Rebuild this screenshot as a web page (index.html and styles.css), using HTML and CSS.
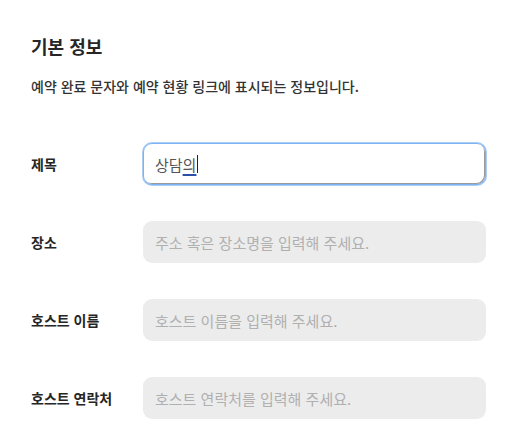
FILE: index.html
```html
<!DOCTYPE html>
<html lang="ko">
<head>
<meta charset="utf-8">
<link rel="stylesheet" href="styles.css">
</head>
<body>
<section class="panel">
  <h2 class="title">기본 정보</h2>
  <p class="desc">예약 완료 문자와 예약 현황 링크에 표시되는 정보입니다.</p>
  <div class="form">
    <div class="row">
      <span class="label">제목</span>
      <div class="field focused">상담<span class="compose">의</span><span class="caret"></span></div>
    </div>
    <div class="row">
      <span class="label">장소</span>
      <div class="field placeholder">주소 혹은 장소명을 입력해 주세요.</div>
    </div>
    <div class="row">
      <span class="label">호스트 이름</span>
      <div class="field placeholder">호스트 이름을 입력해 주세요.</div>
    </div>
    <div class="row">
      <span class="label">호스트 연락처</span>
      <div class="field placeholder">호스트 연락처를 입력해 주세요.</div>
    </div>
  </div>
</section>
</body>
</html>
```
FILE: styles.css
```css
html, body {
  margin: 0;
  padding: 0;
  background: #ffffff;
}
body {
  font-family: "Noto Sans CJK KR", "Noto Sans", sans-serif;
  color: #222;
}
.panel {
  padding: 29px 32px 0 31px;
}
.title {
  margin: 0;
  font-size: 18px;
  font-weight: 700;
  line-height: 34px;
  color: #262626;
}
.desc {
  margin: 13px 0 0;
  font-size: 14px;
  font-weight: 500;
  line-height: 20px;
  color: #333;
}
.form {
  display: flex;
  flex-direction: column;
  gap: 36px;
  margin-top: 47px;
}
.row {
  display: flex;
  align-items: center;
}
.label {
  width: 112px;
  font-size: 14px;
  font-weight: 700;
  color: #262626;
}
.field {
  flex: 1;
  height: 42px;
  box-sizing: border-box;
  border-radius: 9px;
  background: #ececec;
  padding: 0 12px;
  display: flex;
  align-items: center;
  font-size: 15px;
  color: #555;
}
.placeholder {
  color: #b0b0b0;
}
.focused {
  background: #fff;
  border: 1px solid #7db3f2;
  box-shadow: 0 0 0 1px #a9cdf6, inset -1px -1px 0 #9a9a9a;
  padding-left: 11px;
}
.compose {
  text-decoration: underline;
  text-decoration-color: #2c4fa8;
  text-underline-offset: 3px;
  text-decoration-thickness: 1.5px;
}
.caret {
  display: inline-block;
  width: 1px;
  height: 18px;
  background: #222;
  margin-left: 1px;
}
```
